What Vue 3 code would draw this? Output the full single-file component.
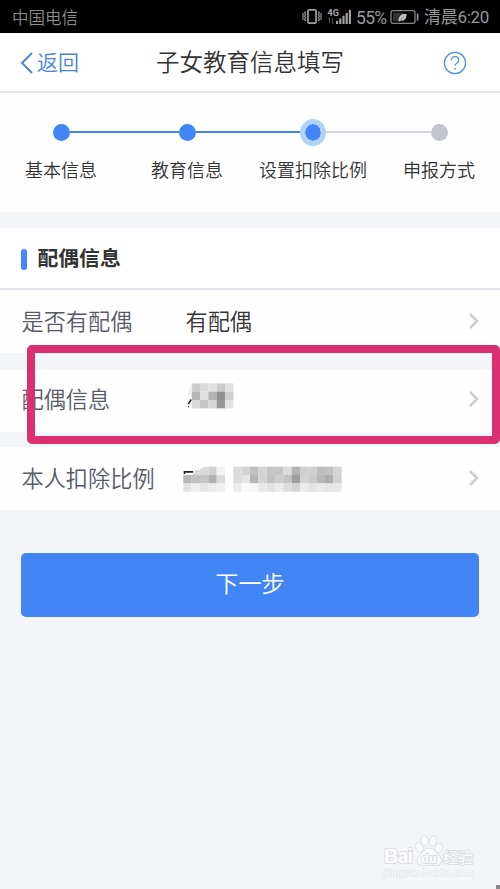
<template>
    <div class="page">
        <div class="status">
            <span class="carrier">中国电信</span>
            <svg class="signal" width="52" height="20" viewBox="0 0 52 20">
                <g fill="none" stroke="#a2a2a2">
                    <rect x="6" y="2.8" width="8" height="13.4" rx="1.2" stroke-width="1.7" />
                    <path d="M3.6 4.5l-1 1.5 1 1.6-1 1.6 1 1.6-1 1.6 1 1.6M1 6v7M16.4 4.5l1 1.5-1 1.6 1 1.6-1 1.6 1 1.6-1 1.6M19 6v7" stroke-width="1.1" />
                </g>
                <text x="25.5" y="8.8" class="net">4G</text>
                <path d="M27.5 10.5v6M26 12l1.5-1.5M30.5 10.5v6M32 15l-1.5 1.5" fill="none" stroke="#444" stroke-width="1" />
                <path d="M34 14h2.2v3H34zM37.2 11.5h2.2V17h-2.2zM40.4 8.7h2.2V17h-2.2zM43.6 6h2.2v11h-2.2zM46.8 2.8H49V17h-2.2z" fill="#a2a2a2" />
            </svg>
            <span class="percent">55%</span>
            <svg class="battery" width="30" height="16" viewBox="0 0 30 16">
                <rect x="1" y="1.7" width="24" height="12.6" rx="2" fill="#000" stroke="#858585" stroke-width="1.3" />
                <rect x="3" y="3.7" width="11" height="8.6" fill="#333" />
                <path d="M8.5 12.2c0-5 2.5-7.4 8-7.5.2 5-2.1 7.5-5.8 6.7l-1.1 1.2z" fill="#c4c4c4" />
                <path d="M10.3 11l3.5-3.5" stroke="#555" stroke-width=".7" />
                <rect x="26.8" y="4.5" width="1.6" height="7" fill="#999" />
            </svg>
            <span class="time">清晨6:20</span>
        </div>

        <div class="header">
            <div class="back">
                <svg width="14" height="24" viewBox="0 0 14 24">
                    <path d="M12 2L2 12l10 10" fill="none" stroke="#4384e0" stroke-width="1.9" />
                </svg>
                <span>返回</span>
            </div>
            <h1>子女教育信息填写</h1>
            <svg class="help" width="24" height="24" viewBox="0 0 24 24" fill="none" stroke="#4a90dc">
                <circle cx="12" cy="12" r="10.6" stroke-width="1.3" />
                <path d="M8.3 9.2c0-4.8 7.4-4.6 7.4-.2 0 2.8-3.6 3-3.6 5.8" stroke-width="1.3" />
                <circle cx="12.1" cy="17.6" r=".9" fill="#4a90dc" stroke="none" />
            </svg>
        </div>

        <div class="steps">
            <div v-for="step in steps" :key="step.name" class="step" :class="step.state">
                <div class="track"><i class="dot"></i></div>
                <span>{{ step.name }}</span>
            </div>
        </div>

        <div class="title"><i></i><h2>配偶信息</h2></div>

        <div v-for="row in rows" :key="row.label" class="row" :class="row.type">
            <label>{{ row.label }}</label>
            <span v-if="row.value" class="value">{{ row.value }}</span>
            <svg v-else class="mosaic" width="175" height="40" viewBox="0 0 175 40">
                <g v-for="(line, y) in row.cells" :key="y">
                    <template v-for="(shade, x) in line" :key="x">
                        <rect
                            v-if="shade"
                            :x="row.x + x * 25 / 3"
                            :y="row.y + y * 25 / 3"
                            width="8.4"
                            height="8.4"
                            :fill="grey(shade)" />
                    </template>
                </g>
                <g v-if="row.type == 'spouse'">
                    <path d="M12.2 4.3L8.5 8l-1 6 4.7-3z" fill="#eee" />
                    <path d="M11.2 17.5l-3 4.5M8 24.6h1" stroke="#222" stroke-width="1.4" />
                </g>
                <g v-else>
                    <path d="M13 9.8l7-1.2 5-2.9h3.5v8.4H13z" fill="#dadada" />
                    <path d="M4.5 13v-2.1H13" fill="none" stroke="#222" stroke-width="1.6" />
                </g>
            </svg>
            <svg class="arrow" width="12" height="18" viewBox="0 0 12 18">
                <path d="M2 2l7 7-7 7" fill="none" stroke="#ccced4" stroke-width="2.6" />
            </svg>
        </div>

        <button class="next">下一步</button>

        <div class="marker"></div>

        <svg class="watermark" width="100" height="52" viewBox="0 0 100 52">
            <g fill="#fafbfd" stroke="#dddfe3" stroke-width="2">
                <text x="4" y="32" class="logo" textLength="29">Bai</text>
                <ellipse cx="39.5" cy="16" rx="3.3" ry="4.2" transform="rotate(-20 39.5 16)" />
                <ellipse cx="44.5" cy="9.8" rx="3.1" ry="4.5" />
                <ellipse cx="53" cy="10" rx="3.1" ry="4.5" transform="rotate(12 53 10)" />
                <ellipse cx="58.5" cy="17" rx="3.3" ry="4.2" transform="rotate(25 58.5 17)" />
                <path d="M49 17.5c-4 0-5 3.5-8 6-5 4-4 10.5 2 10.5 4 0 8-1 12 0 7 .7 7.5-6.5 3-10.5-3-3-5-6-9-6z" />
                <text x="41" y="31.5" class="du" textLength="16">du</text>
                <text x="63" y="32" class="jy" textLength="30">经验</text>
                <text x="4" y="45" class="url" textLength="89">jingyan.baidu.com</text>
            </g>
        </svg>
        <i class="corner"></i>
    </div>
</template>

<script setup>
    import { ref } from "vue";

    const steps = ref([
        { name: '基本信息', state: 'done first' },
        { name: '教育信息', state: 'done' },
        { name: '设置扣除比例', state: 'current' },
        { name: '申报方式', state: 'todo last' },
    ]);

    // cells hold the grey level of each tile of a hidden value, 0 leaves it empty
    const rows = ref([
        { label: '是否有配偶', value: '有配偶', type: 'has' },
        {
            label: '配偶信息', type: 'spouse', x: 11.7, y: 1.3,
            cells: [
                [205, 218, 224, 203, 226],
                [181, 224, 180, 145, 207],
                [217, 197, 214, 151, 226],
            ],
        },
        {
            label: '本人扣除比例', type: 'ratio', x: 3.3, y: 5.7,
            cells: [
                [0, 0, 0, 211, 243, 0, 220, 211, 191, 211, 197, 197, 220, 178, 206, 208, 190, 194, 212],
                [180, 192, 197, 176, 218, 0, 218, 229, 180, 211, 194, 206, 195, 158, 211, 202, 184, 174, 210],
                [225, 238, 228, 236, 240, 0, 235, 250, 247, 232, 226, 236, 220, 211, 235, 228, 235, 230, 231],
            ],
        },
    ]);

    const grey = (n) => `rgb(${n}, ${n}, ${n})`;
</script>

<style>
    body {
        margin: 0;
        background: #f3f5f9;
    }
</style>

<style scoped>
.page {
    position: relative;
    width: 500px;
    height: 889px;
    overflow: hidden;
    background: #f3f5f9;
    font-family: "Noto Sans CJK SC", sans-serif;
    font-weight: 350;
    color: #333;
}
svg {
    display: block;
    flex: none;
}
.status {
    display: flex;
    align-items: center;
    height: 33px;
    padding: 0 11px 0 12px;
    box-sizing: border-box;
    background: #000;
    color: #999;
    font-size: 16.5px;
    line-height: 30px;
    white-space: nowrap;
}
.carrier {
    width: 290px;
    flex: none;
    color: #8c8c8c;
}
.signal {
    margin-top: 1px;
}
.net {
    font: bold 9px Roboto, sans-serif;
    fill: #aaa;
}
.percent {
    width: 36px;
    padding: 2px 0 0 2px;
    box-sizing: border-box;
    font-family: Roboto, sans-serif;
    font-size: 17.5px;
    font-weight: 400;
    letter-spacing: -0.7px;
}
.battery {
    margin-top: 1px;
}
.time {
    margin-left: 4px;
    padding-top: 1px;
    font-family: Roboto, "Noto Sans CJK SC", sans-serif;
    font-size: 17px;
    font-weight: 400;
    line-height: 30px;
    letter-spacing: -0.3px;
}
.header {
    display: flex;
    align-items: center;
    height: 60px;
    padding: 0 33px 0 20px;
    box-sizing: border-box;
    border-bottom: 2px solid #e3e7ed;
    background: #fff;
}
.back {
    display: flex;
    align-items: center;
    gap: 3px;
    width: 136px;
    color: #4384e0;
    font-size: 21px;
}
.back span {
    margin-top: -3px;
}
.back svg {
    margin-top: 2px;
}
h1 {
    flex: 1;
    margin: -3px 0 0;
    font-size: 23.5px;
    line-height: 50px;
    font-weight: inherit;
    white-space: nowrap;
}
.help {
    margin-top: 1px;
}
.steps {
    display: flex;
    height: 119px;
    padding-top: 25px;
    margin: 0 -2px 16px;
    box-sizing: border-box;
    background: #fefefe;
}
.step {
    width: 126px;
    text-align: center;
    font-size: 18px;
    line-height: 26px;
    white-space: nowrap;
}
.track {
    display: flex;
    align-items: center;
    height: 28px;
    margin-bottom: 10px;
}
.track::before,
.track::after {
    content: "";
    flex: 1;
    height: 1.5px;
    background: #4384e8;
}
.dot {
    width: 17px;
    height: 17px;
    border-radius: 50%;
    background: #4285f4;
}
.current .dot {
    width: 16px;
    border: 5.5px solid #b0d2f6;
    border-radius: 50%;
    background-clip: padding-box;
}
.current .track::after,
.todo .track::before {
    background: #d0d4dc;
}
.todo .dot {
    background: #c2c5d0;
}
.first .track::before,
.last .track::after {
    background: none;
}
.title {
    display: flex;
    align-items: center;
    height: 62px;
    padding-left: 21px;
    box-sizing: border-box;
    border-bottom: 2px solid #dfe4e9;
    background: #fff;
}
.title i {
    width: 5.5px;
    height: 21px;
    margin: 2px 11px 0 0;
    border-radius: 3px;
    background: #4285f4;
}
h2 {
    margin: -3px 0 0;
    font-size: 20.8px;
    line-height: 30px;
    font-weight: 700;
}
.row {
    display: flex;
    align-items: center;
    height: 63px;
    padding: 0 20px 0 21.5px;
    background: #fefefe;
    font-size: 22.2px;
    line-height: 34px;
    white-space: nowrap;
}
.row label {
    width: 164px;
    color: #575b66;
}
.row label,
.value {
    margin-top: -4px;
}
.mosaic {
    margin: 4px 0 0 -5.5px;
}
.arrow {
    margin: -1px 0 0 auto;
}
.spouse {
    height: 62px;
    margin: 17px 0 15px;
}
.spouse .mosaic {
    margin-top: 2px;
}
.spouse label {
    margin-top: -6px;
}
.spouse .arrow {
    margin-top: -4px;
}
.next {
    display: block;
    width: 458px;
    height: 64px;
    margin: 43px 21px 0;
    padding: 0 0 6px;
    border: 0;
    border-radius: 5px;
    background: #4285f4;
    color: #fff;
    font-family: inherit;
    font-size: 23.2px;
    font-weight: inherit;
}
/* highlight drawn over the spouse row */
.marker {
    position: absolute;
    left: 27px;
    top: 345px;
    width: 473px;
    height: 99px;
    box-sizing: border-box;
    border: 8px solid #db3070;
    border-radius: 5px;
}
.watermark {
    position: absolute;
    left: 380px;
    top: 831px;
    paint-order: stroke;
}
.logo {
    font: bold 20px "Liberation Sans", sans-serif;
}
.du {
    font: bold 13px "Liberation Sans", sans-serif;
}
.jy {
    font: 15px "Noto Sans CJK SC", sans-serif;
}
.url {
    font: 11px "Liberation Serif", serif;
    stroke: #e6e8ec;
    stroke-width: 1.6;
}
.corner {
    position: absolute;
    right: 0;
    bottom: 0;
    width: 4px;
    height: 4px;
    background: #888;
}
</style>
